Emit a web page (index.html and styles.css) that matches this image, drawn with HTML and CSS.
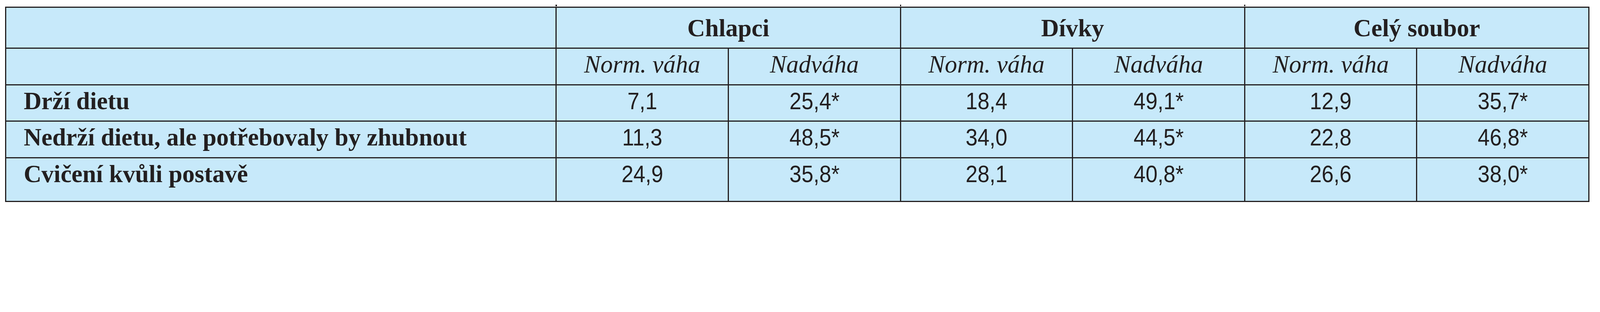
FILE: index.html
```html
<!DOCTYPE html>
<html lang="cs">
<head>
<meta charset="utf-8">
<title>Tabulka</title>
<link rel="stylesheet" href="styles.css">
</head>
<body>
<table class="data">
  <colgroup>
    <col class="col-label">
    <col><col><col><col><col><col>
  </colgroup>
  <thead>
    <tr class="row-group">
      <th class="tick-top"></th>
      <th colspan="2" class="tick-top">Chlapci</th>
      <th colspan="2" class="tick-top">Dívky</th>
      <th colspan="2">Celý soubor</th>
    </tr>
    <tr class="row-sub">
      <th></th>
      <th>Norm. váha</th>
      <th>Nadváha</th>
      <th>Norm. váha</th>
      <th>Nadváha</th>
      <th>Norm. váha</th>
      <th>Nadváha</th>
    </tr>
  </thead>
  <tbody>
    <tr class="row-body">
      <th class="label">Drží dietu</th>
      <td><span class="num">7,1</span></td>
      <td><span class="num">25,4*</span></td>
      <td><span class="num">18,4</span></td>
      <td><span class="num">49,1*</span></td>
      <td><span class="num">12,9</span></td>
      <td><span class="num">35,7*</span></td>
    </tr>
    <tr class="row-body row-mid">
      <th class="label">Nedrží dietu, ale potřebovaly by zhubnout</th>
      <td><span class="num">11,3</span></td>
      <td><span class="num">48,5*</span></td>
      <td><span class="num">34,0</span></td>
      <td><span class="num">44,5*</span></td>
      <td><span class="num">22,8</span></td>
      <td><span class="num">46,8*</span></td>
    </tr>
    <tr class="row-body row-last">
      <th class="label tick-bottom">Cvičení kvůli postavě</th>
      <td class="tick-bottom"><span class="num">24,9</span></td>
      <td class="tick-bottom"><span class="num">35,8*</span></td>
      <td class="tick-bottom"><span class="num">28,1</span></td>
      <td class="tick-bottom"><span class="num">40,8*</span></td>
      <td class="tick-bottom"><span class="num">26,6</span></td>
      <td><span class="num">38,0*</span></td>
    </tr>
  </tbody>
</table>
</body>
</html>
```
FILE: styles.css
```css
:root {
  /* one pixel of the 6111px-wide reference frame */
  --u: calc(100vw / 6111);
  --line: #231f20;
  --bw: calc(var(--u) * 5);
}

html, body {
  margin: 0;
  padding: 0;
  background: #ffffff;
}

.data {
  box-sizing: border-box;
  margin: calc(var(--u) * 25) 0 0 calc(var(--u) * 20);
  width: calc(var(--u) * 6051);
  table-layout: fixed;
  border-collapse: separate;
  border-spacing: 0;
  border-top: var(--bw) solid var(--line);
  border-left: var(--bw) solid var(--line);
  background: #c7e9fa;
  color: var(--line);
  font-family: "Liberation Serif", "Times New Roman", serif;
  font-size: calc(var(--u) * 94);
  line-height: calc(var(--u) * 94);
}

.col-label {
  width: calc(var(--u) * 2102);
}

.data th,
.data td {
  box-sizing: border-box;
  position: relative;
  border-right: var(--bw) solid var(--line);
  border-bottom: var(--bw) solid var(--line);
  padding: 0;
  text-align: center;
  white-space: nowrap;
}

.row-group > th {
  height: calc(var(--u) * 157);
  padding-top: calc(var(--u) * 32);
  vertical-align: top;
  font-weight: bold;
}

.row-sub > th {
  height: calc(var(--u) * 141);
  padding-top: calc(var(--u) * 14);
  vertical-align: top;
  font-weight: normal;
  font-style: italic;
}

.row-body > th,
.row-body > td {
  height: calc(var(--u) * 138);
  padding-top: calc(var(--u) * 13);
  vertical-align: baseline;
}

.row-mid > th,
.row-mid > td {
  height: calc(var(--u) * 141);
}

.row-last > th,
.row-last > td {
  height: calc(var(--u) * 167);
}

.data .label {
  text-align: left;
  font-weight: bold;
  padding-left: calc(var(--u) * 66);
}

.num {
  display: inline-block;
  font-family: "Liberation Sans", Arial, sans-serif;
  font-size: calc(var(--u) * 91);
  line-height: calc(var(--u) * 91);
  font-weight: normal;
  transform: scaleX(0.9);
}

.tick-top::before {
  content: "";
  position: absolute;
  left: 100%;
  top: calc(var(--u) * -11);
  width: var(--bw);
  height: calc(var(--u) * 6);
  background: var(--line);
}

.tick-bottom::after {
  content: "";
  position: absolute;
  left: 100%;
  top: calc(100% + var(--bw));
  width: var(--bw);
  height: calc(var(--u) * 6);
  background: var(--line);
}
```
